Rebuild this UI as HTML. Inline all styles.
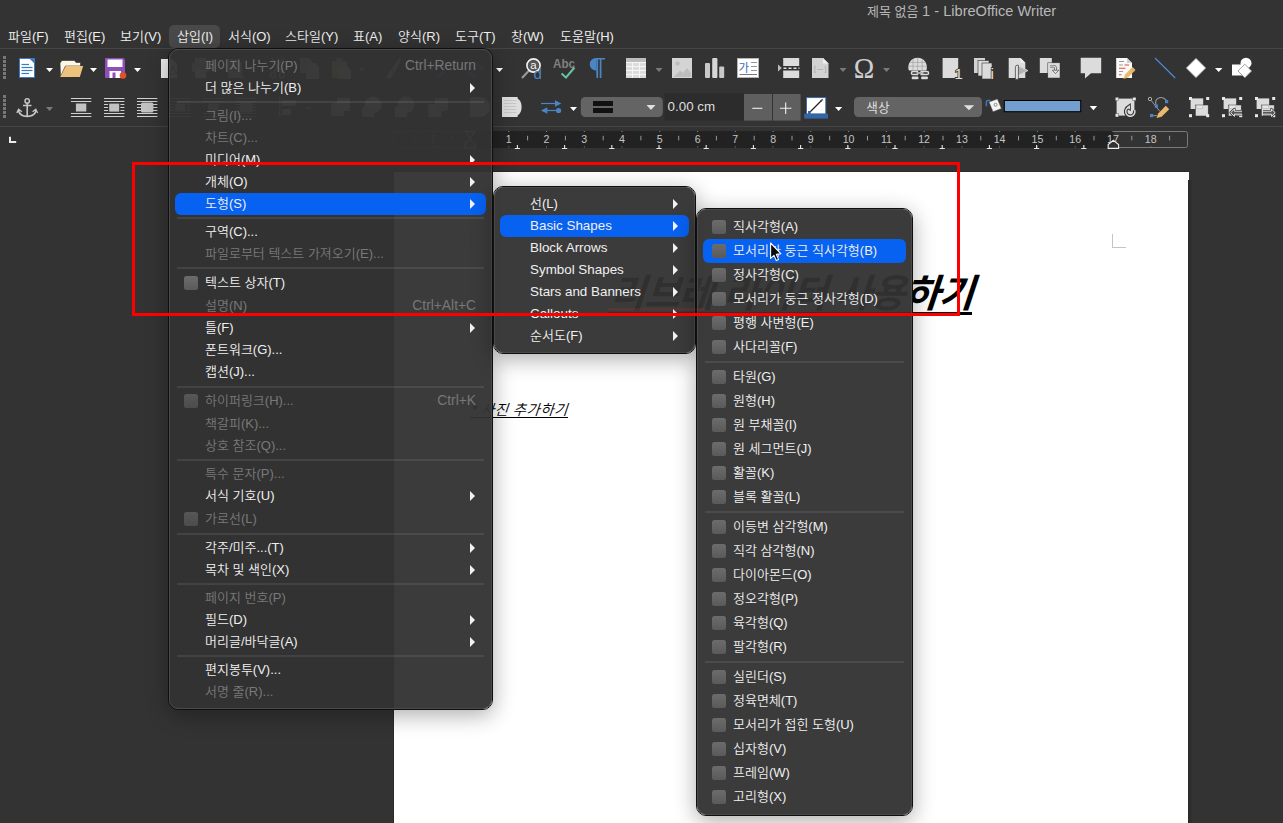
<!DOCTYPE html>
<html lang="ko">
<head>
<meta charset="utf-8">
<title>제목 없음 1 - LibreOffice Writer</title>
<style>
html,body{margin:0;padding:0;}
body{width:1283px;height:823px;overflow:hidden;background:#333333;position:relative;
 font-family:"Liberation Sans","Noto Sans CJK KR",sans-serif;font-size:13px;color:#e6e6e6;}
.abs{position:absolute;}
#title{left:0;top:0;width:1283px;height:22px;}
#title span{position:absolute;left:867px;top:0px;font-size:13px;color:#b8b8b8;white-space:nowrap;line-height:22px;}
#title b{font-weight:normal;font-size:14.6px;}
#menubar span{position:absolute;top:28px;height:18px;line-height:18px;font-size:13px;color:#f0f0f0;white-space:nowrap;font-weight:350;}
#mb-hl{left:169px;top:25px;width:51px;height:23px;background:#494949;border-radius:5px;}
.hline{position:absolute;left:0;width:1283px;height:1px;background:#454545;}
/* page */
#page{left:394px;top:172px;width:794px;height:660px;background:#ffffff;}
#pgshadow{left:393px;top:171px;width:796px;height:660px;background:#2a2a2a;}
/* menus */
.menu{position:absolute;box-sizing:border-box;border:1px solid #0f0f0f;border-radius:10px;
 box-shadow:0 5px 22px rgba(0,0,0,0.33);}
.menu .in{position:absolute;left:0;top:0;right:0;bottom:0;border:1px solid #4a4a4a;border-radius:9px;background:rgba(50,50,50,0.955);}
.mi{position:absolute;white-space:nowrap;font-size:13px;line-height:20px;height:20px;color:#f0f0f0;font-weight:350;}
.mi.d{color:#797979;}
.mi.l{font-size:13.4px;}
.sc{position:absolute;white-space:nowrap;font-size:13.8px;line-height:20px;height:20px;color:#777;text-align:right;}
.sep{position:absolute;height:2px;background:rgba(255,255,255,0.085);}
.hl{position:absolute;background:#0761f1;border-radius:6px;}
.cb{position:absolute;width:14px;height:14px;border-radius:2.5px;background:linear-gradient(#6c6c6c,#5a5a5a);}
.cb.d{background:linear-gradient(#575757,#4c4c4c);}
.ar{position:absolute;width:0;height:0;border-left:5.5px solid #f2f2f2;border-top:5px solid transparent;border-bottom:5px solid transparent;}
#doctitle{left:608px;top:267px;width:364px;height:45px;border-bottom:3px solid #000;font-family:"Liberation Sans","Noto Sans CJK KR",sans-serif;font-size:38.4px;letter-spacing:-0.95px;font-weight:bold;color:#000;white-space:nowrap;line-height:54px;}
#doctitle span{display:inline-block;transform:skewX(-18.43deg);transform-origin:0 44px;}
#docline{left:470px;top:397px;width:98px;height:20px;border-bottom:1px solid #000;font-family:"Liberation Sans","Noto Sans CJK KR",sans-serif;font-size:14.67px;letter-spacing:0.3px;color:#000;white-space:nowrap;line-height:26.4px;font-weight:350;}
#docline span{display:inline-block;transform:skewX(-18.43deg);transform-origin:0 18px;}
#redbox{left:132px;top:162px;width:822px;height:148px;border:3px solid #ff0000;}
</style>
</head>
<body>
<div id="title" class="abs"><span>제목 없음 <b>1 - LibreOffice Writer</b></span></div>
<div id="menubar">
<div id="mb-hl" class="abs"></div>
<span style="left:8px">파일(F)</span>
<span style="left:64px">편집(E)</span>
<span style="left:120px">보기(V)</span>
<span style="left:177px">삽입(I)</span>
<span style="left:228px">서식(O)</span>
<span style="left:285px">스타일(Y)</span>
<span style="left:353px">표(A)</span>
<span style="left:398px">양식(R)</span>
<span style="left:455px">도구(T)</span>
<span style="left:511px">창(W)</span>
<span style="left:560px">도움말(H)</span>
</div>
<div class="hline" style="top:48px"></div>
<div class="hline" style="top:126px"></div>
<!-- TOOLBARS -->
<div id="toolbars"><svg class="abs" style="left:0;top:0" width="1283" height="130" viewBox="0 0 1283 130"><rect x="3" y="56" width="3" height="3" fill="#777"/>
<rect x="3" y="60" width="3" height="3" fill="#777"/>
<rect x="3" y="64" width="3" height="3" fill="#777"/>
<rect x="3" y="68" width="3" height="3" fill="#777"/>
<rect x="3" y="72" width="3" height="3" fill="#777"/>
<rect x="3" y="76" width="3" height="3" fill="#777"/>
<rect x="3" y="95" width="3" height="3" fill="#777"/>
<rect x="3" y="99" width="3" height="3" fill="#777"/>
<rect x="3" y="103" width="3" height="3" fill="#777"/>
<rect x="3" y="107" width="3" height="3" fill="#777"/>
<rect x="3" y="111" width="3" height="3" fill="#777"/>
<rect x="3" y="115" width="3" height="3" fill="#777"/>
<path d="M19.5 58.5H30L34.5 63V77.5H19.5Z" fill="#fff" stroke="#3b7bc4" stroke-width="1"/>
<path d="M29.6 58H35V63.4Z" fill="#3b7bc4"/>
<path d="M21.5 64.5H29" stroke="#3b7bc4" stroke-width="1.2"/>
<path d="M21.5 67.5H32.5" stroke="#3b7bc4" stroke-width="1.2"/>
<path d="M21.5 70.5H32.5" stroke="#3b7bc4" stroke-width="1.2"/>
<path d="M21.5 73.5H29" stroke="#3b7bc4" stroke-width="1.2"/>
<path d="M46 68H53L49.5 72Z" fill="#ffffff"/>
<path d="M60 63 62 60.5H74.5L76 62.5H80.5V66H65.5L60.5 76.5Z" fill="#fff7e6" stroke="#2b2b2b" stroke-width="0.6"/>
<path d="M60.2 77 65.8 66H83.2L79.8 77Z" fill="#ecc27c"/>
<path d="M90 68H97L93.5 72Z" fill="#ffffff"/>
<path d="M105 58H123.5L125 59.5V78H105Z" fill="#8e4fb8"/>
<rect x="107.5" y="59.5" width="15" height="7.5" fill="#fff"/>
<path d="M109.5 71H121V78H109.5Z" fill="#fff"/><rect x="112.5" y="72.5" width="3" height="5.5" fill="#8e4fb8"/>
<circle cx="123" cy="75.5" r="3.3" fill="#e0502c"/>
<path d="M134 68H141L137.5 72Z" fill="#ffffff"/>
<path d="M161 59H172L177 64V78H161Z" fill="#eeeeee"/><path d="M169 76Q172 69 173 65Q174 70 177 74Q172 73 169 76Z" fill="none" stroke="#d04030" stroke-width="1.2"/>
<g><rect x="195" y="58" width="11" height="6" fill="#ddd"/><rect x="192" y="63" width="17" height="9" rx="1" fill="#ccc"/><rect x="195" y="70" width="11" height="8" fill="#eee"/><path d="M228 59H238L242 63V78H228Z" fill="#ccc"/><circle cx="236" cy="69" r="5" fill="#999" stroke="#eee" stroke-width="1.5"/><path d="M239.500 73 244 78" stroke="#bbb" stroke-width="2"/><path d="M272 58 281 72M283 58 274 72" stroke="#ccc" stroke-width="1.6"/><circle cx="273" cy="75" r="2.6" fill="none" stroke="#ccc" stroke-width="1.4"/><circle cx="282" cy="75" r="2.6" fill="none" stroke="#ccc" stroke-width="1.4"/><path d="M300 58H309L312 61V73H300Z" fill="#ccc"/><path d="M306 63H315L319 67V79H306Z" fill="#e4e4e4"/><path d="M332 61H347V78H332Z" fill="#e8c080"/><rect x="336" y="58" width="7" height="5" rx="1" fill="#bbb"/><path d="M339 66H347L351 70V79H339Z" fill="#eee"/><path d="M386 78 390 70 394 72 391 78Z" fill="#e8c080"/><path d="M391 70 399 58 401 59.500 395 72Z" fill="#ccc"/><path d="M431 70A6.500 6.500 0 1 1 437 76" fill="none" stroke="#4a86c5" stroke-width="2.2"/><path d="M427 66 431 72 435 66Z" fill="#4a86c5"/><path d="M482 70A6.500 6.500 0 1 0 476 76" fill="none" stroke="#4a86c5" stroke-width="2.2"/><path d="M486 66 482 72 478 66Z" fill="#4a86c5"/></g>
<path d="M358 68H365L361.5 72Z" fill="#999"/>
<path d="M448 68H455L451.5 72Z" fill="#999"/>
<path d="M496 68H503L499.5 72Z" fill="#ffffff"/>
<path d="M522 78 529 70.5" stroke="#9a9a9a" stroke-width="2"/>
<circle cx="533.5" cy="65.5" r="6.6" fill="#555" stroke="#f2f2f2" stroke-width="1.6"/>
<text x="533.4" y="69.3" font-size="11.5" fill="#f4f4f4" text-anchor="middle" font-family="Liberation Sans,sans-serif">a</text>
<text x="533.6" y="78.6" font-size="15" fill="#4a86c5" font-family="Liberation Sans,sans-serif">d</text>
<text x="553" y="68" font-size="12.5" font-weight="bold" fill="#808080" font-family="Liberation Sans,sans-serif" textLength="22" lengthAdjust="spacingAndGlyphs">Abc</text>
<path d="M561.5 73.5 566 77.5 574.5 67.5" fill="none" stroke="#66c2a4" stroke-width="2"/>
<path d="M596.5 78V59.5H605V58H596A5.7 5.7 0 0 0 596 70.5Z" fill="#4a86c5"/><path d="M597.3 59V78M600.6 59V78" stroke="#4a86c5" stroke-width="1.7"/>
<rect x="626" y="58" width="20" height="20" fill="#dcdcdc"/><rect x="626" y="58" width="20" height="4" fill="#bdbdbd"/>
<path d="M632.5 62V78" stroke="#f6f6f6" stroke-width="1"/>
<path d="M639.5 62V78" stroke="#f6f6f6" stroke-width="1"/>
<path d="M626 62.5H646" stroke="#f6f6f6" stroke-width="1"/>
<path d="M626 66.5H646" stroke="#f6f6f6" stroke-width="1"/>
<path d="M626 70.5H646" stroke="#f6f6f6" stroke-width="1"/>
<path d="M626 74.5H646" stroke="#f6f6f6" stroke-width="1"/>
<path d="M655.5 68H662.5L659.0 72Z" fill="#7a7a7a"/>
<rect x="672" y="58" width="20" height="20" fill="#d4d4d4"/><circle cx="677.5" cy="63.5" r="2.2" fill="#bdbdbd"/><path d="M673.5 77 680 70.5 683 73 687 68 691 73V77Z" fill="#bdbdbd"/>
<rect x="705" y="63" width="5" height="15" rx="1" fill="#c9c9c9"/><rect x="712.2" y="58" width="5.2" height="20" rx="1" fill="#d6d6d6"/><rect x="719.2" y="66.5" width="5" height="11.5" rx="1" fill="#c9c9c9"/>
<rect x="737.5" y="58.5" width="21" height="19" fill="#fff" stroke="#b5b5b5" stroke-width="1"/>
<text x="738.6" y="71.6" font-size="11.5" fill="#3b6fb5" font-family="Noto Sans CJK KR,sans-serif">가</text>
<path d="M751 62.5H757M751 66.5H757M751 70.5H757" stroke="#8a8a8a" stroke-width="0.9"/><path d="M739.5 74.5H757" stroke="#6a6a6a" stroke-width="0.9"/>
<path d="M778 64.5V71.5L781.8 68Z" fill="#bdbdbd"/><rect x="783.2" y="58" width="16" height="8" fill="#dcdcdc"/><rect x="783.2" y="70.5" width="16" height="7.5" fill="#dcdcdc"/><path d="M783.5 68.2H799.5" stroke="#dcdcdc" stroke-width="1.4" stroke-dasharray="3 2"/>
<path d="M812 58H823L828.5 63.5V78H812Z" fill="#d2d2d2"/><path d="M823 58V63.5H828.5Z" fill="#efefef"/><path d="M816 66.5H814.8V72.5H816M824.5 66.5H825.7V72.5H824.5M817.3 69.5H823.2" fill="none" stroke="#b4b4b4" stroke-width="1.1"/>
<path d="M839.5 68H846.5L843.0 72Z" fill="#7a7a7a"/>
<text x="864" y="78" font-size="29" fill="#cfcfcf" text-anchor="middle" font-family="Liberation Serif,serif" textLength="20.5" lengthAdjust="spacingAndGlyphs">Ω</text>
<path d="M883 68H890L886.5 72Z" fill="#7a7a7a"/>
<path d="M909 70.6A9.3 9.3 0 1 1 926.2 70.6Z" fill="#dcdcdc"/><path d="M917.6 58V70.6M913 59.2V70.6M922.2 59.2V70.6M909.8 62.4H925.4M908.6 66.2H926.6" stroke="#a0a0a0" stroke-width="0.7"/>
<path d="M913 71.4H918.2M913 74.6H918.2M913 71.4A1.6 1.6 0 0 0 913 74.6M920.4 71.4H927M920.4 74.6H927M927 71.4A1.6 1.6 0 0 1 927 74.6" fill="none" stroke="#dcdcdc" stroke-width="1.5"/><path d="M916.5 73H923.5" stroke="#dcdcdc" stroke-width="1.4"/>
<rect x="911.6" y="76.6" width="7" height="2.6" rx="1.3" fill="#dcdcdc"/><rect x="921" y="76.6" width="7" height="2.6" rx="1.3" fill="#dcdcdc"/>
<rect x="942.6" y="58" width="15.6" height="20" fill="#dcdcdc"/><text x="954.6" y="79" font-size="15" fill="#e4e4e4" stroke="#333" stroke-width="1.6" paint-order="stroke" style="font-family:'Liberation Sans',sans-serif">1</text>
<rect x="974" y="58" width="11" height="15" fill="#d2d2d2"/><rect x="978" y="60.5" width="11" height="15.5" fill="#dcdcdc" stroke="#333" stroke-width="0.6"/><rect x="982" y="63" width="10" height="16" fill="#dcdcdc" stroke="#333" stroke-width="0.6"/><text x="990.6" y="79" font-size="15" fill="#e4e4e4" stroke="#333" stroke-width="1.4" paint-order="stroke" style="font-family:'Liberation Sans',sans-serif">i</text>
<path d="M1008.7 58H1020.5L1025.3 62.8V78H1008.7Z" fill="#dcdcdc"/><path d="M1020.5 58V62.8H1025.3Z" fill="#f0f0f0"/>
<path d="M1017.6 65.6 1028 70.6 1017.6 75.8Z" fill="#b4b4b4" stroke="#dcdcdc" stroke-width="0.8"/><path d="M1015.4 79.4V67.2Q1015.4 65.2 1017.4 65.2H1018.4V79.4Z" fill="#e2e2e2" stroke="#333" stroke-width="0.7"/>
<rect x="1039.8" y="58" width="12" height="15" fill="#dcdcdc"/><rect x="1047.8" y="62.8" width="12.2" height="15.2" fill="#dcdcdc" stroke="#333" stroke-width="0.5"/><path d="M1050 66.2H1053.8Q1055.5 66.2 1055.5 68.5V70.3" fill="none" stroke="#555" stroke-width="2.6"/><path d="M1050 66.2H1053.8Q1055.5 66.2 1055.5 68.5V70.3" fill="none" stroke="#e0e0e0" stroke-width="1.2"/><path d="M1052.2 70.2H1058.8L1055.5 73.6Z" fill="#e0e0e0" stroke="#555" stroke-width="0.7"/>
<path d="M1080.7 57.8H1101.2V73.3H1091L1085 78.4V73.3H1080.7Z" fill="#dcdcdc"/>
<path d="M1116.2 58H1127L1132 63V78H1116.2Z" fill="#fafafa"/><path d="M1127 58V63H1132Z" fill="#d0d0d0"/>
<path d="M1119 61.5H1124M1119 71.5H1123" stroke="#9a9a9a" stroke-width="1"/><path d="M1124.5 65H1129M1119 68.2H1125.5M1119 74.7H1121.5" stroke="#e0502c" stroke-width="1.1"/><path d="M1119 65H1122.8" stroke="#9a9a9a" stroke-width="1"/>
<path d="M1123.5 79 1125 74.5 1132.5 67 1135.5 70 1128 77.5Z" fill="#e9b96e"/><path d="M1131 68.5 1134 71.5" stroke="#c89a50" stroke-width="0.8"/>
<path d="M1155 58 1175.2 78" stroke="#4a8fdb" stroke-width="1.1"/>
<path d="M1196 58.4 1205.6 68 1196 77.6 1186.4 68Z" fill="#fff" stroke="#bdbdbd" stroke-width="0.8"/>
<path d="M1215 68H1222.4L1218.7 72Z" fill="#ffffff"/>
<circle cx="1246" cy="63.2" r="5.5" fill="#fff"/><rect x="1232" y="64.5" width="11" height="11" fill="#fff"/><path d="M1244.8 64.2 1251.6 71 1244.8 77.8 1238 71Z" fill="#fff" stroke="#8a8a8a" stroke-width="0.8"/>
<circle cx="27.2" cy="101" r="2.2" fill="none" stroke="#c6c6c6" stroke-width="1.5"/><path d="M27.2 103.2V116M23 105.5H31.5" stroke="#c6c6c6" stroke-width="1.6" fill="none"/><path d="M18.3 110.5Q20 116.2 27.2 116.4Q34.4 116.2 36.2 110.5" fill="none" stroke="#c6c6c6" stroke-width="1.7"/><path d="M16.8 113 18.6 109.2 21.8 111.8M37.6 113 35.8 109.2 32.6 111.8" fill="none" stroke="#c6c6c6" stroke-width="1.3"/>
<path d="M46 107H53L49.5 111Z" fill="#7a7a7a"/>
<path d="M70.9 98.5H91.30000000000001" stroke="#d0d0d0" stroke-width="1"/><path d="M70.9 101.5H91.30000000000001" stroke="#d0d0d0" stroke-width="1"/><path d="M70.9 113.5H91.30000000000001" stroke="#d0d0d0" stroke-width="1"/><path d="M70.9 116.5H91.30000000000001" stroke="#d0d0d0" stroke-width="1"/><rect x="75.9" y="103.5" width="10.4" height="8" fill="#c2c2c2"/>
<path d="M104 98.5H124.4" stroke="#d0d0d0" stroke-width="1"/><path d="M104 101.5H124.4" stroke="#d0d0d0" stroke-width="1"/><path d="M104 104.5H124.4" stroke="#d0d0d0" stroke-width="1"/><path d="M104 107.5H124.4" stroke="#d0d0d0" stroke-width="1"/><path d="M104 110.5H124.4" stroke="#d0d0d0" stroke-width="1"/><path d="M104 113.5H124.4" stroke="#d0d0d0" stroke-width="1"/><path d="M104 116.5H124.4" stroke="#d0d0d0" stroke-width="1"/><rect x="108" y="102.8" width="12.4" height="9.6" fill="#333"/><rect x="109.2" y="103.6" width="10" height="8" fill="#c2c2c2"/>
<path d="M137 98.5H157.4" stroke="#d0d0d0" stroke-width="1"/><path d="M137 101.5H157.4" stroke="#d0d0d0" stroke-width="1"/><path d="M137 104.5H157.4" stroke="#d0d0d0" stroke-width="1"/><path d="M137 107.5H157.4" stroke="#d0d0d0" stroke-width="1"/><path d="M137 110.5H157.4" stroke="#d0d0d0" stroke-width="1"/><path d="M137 113.5H157.4" stroke="#d0d0d0" stroke-width="1"/><path d="M137 116.5H157.4" stroke="#d0d0d0" stroke-width="1"/><rect x="141" y="102.6" width="12.4" height="10" rx="1.5" fill="#c2c2c2"/>
<path d="M170 98.5H190.4" stroke="#d0d0d0" stroke-width="1"/><path d="M170 101.5H190.4" stroke="#d0d0d0" stroke-width="1"/><path d="M170 104.5H190.4" stroke="#d0d0d0" stroke-width="1"/><path d="M170 107.5H190.4" stroke="#d0d0d0" stroke-width="1"/><path d="M170 110.5H190.4" stroke="#d0d0d0" stroke-width="1"/><path d="M170 113.5H190.4" stroke="#d0d0d0" stroke-width="1"/><path d="M170 116.5H190.4" stroke="#d0d0d0" stroke-width="1"/><rect x="174" y="102.8" width="12.4" height="9.6" fill="#333"/><rect x="175.2" y="103.6" width="10" height="8" fill="#c2c2c2"/>
<path d="M203 98.5H223.4" stroke="#d0d0d0" stroke-width="1"/><path d="M203 101.5H223.4" stroke="#d0d0d0" stroke-width="1"/><path d="M203 113.5H223.4" stroke="#d0d0d0" stroke-width="1"/><path d="M203 116.5H223.4" stroke="#d0d0d0" stroke-width="1"/><rect x="208" y="103.5" width="10.4" height="8" fill="#c2c2c2"/>
<path d="M236 98.5H256.4" stroke="#d0d0d0" stroke-width="1"/><path d="M236 101.5H256.4" stroke="#d0d0d0" stroke-width="1"/><path d="M236 104.5H256.4" stroke="#d0d0d0" stroke-width="1"/><path d="M236 107.5H256.4" stroke="#d0d0d0" stroke-width="1"/><path d="M236 110.5H256.4" stroke="#d0d0d0" stroke-width="1"/><path d="M236 113.5H256.4" stroke="#d0d0d0" stroke-width="1"/><path d="M236 116.5H256.4" stroke="#d0d0d0" stroke-width="1"/><rect x="240" y="102.6" width="12.4" height="10" rx="1.5" fill="#c2c2c2"/>
<g><rect x="279" y="97" width="1.500" height="20" fill="#ccc"/><rect x="282" y="100" width="14" height="6" fill="#ccc"/><rect x="282" y="109" width="9" height="6" fill="#ddd"/><rect x="331" y="103" width="13" height="13" fill="#ccc"/><rect x="337" y="98" width="13" height="13" fill="#e4e4e4"/><circle cx="373" cy="105" r="8.500" fill="#d8d8d8"/><rect x="362" y="107" width="12" height="10" fill="#c4c4c4"/><circle cx="406" cy="105" r="8.500" fill="#c4c4c4"/><rect x="395" y="107" width="12" height="10" fill="#dcdcdc"/><rect x="428.500" y="104" width="13" height="13" fill="#e4e4e4"/><rect x="435" y="98" width="13" height="13" fill="#ccc"/><path d="M470 97H480A9.800 9.800 0 0 1 480 117H470Z" fill="#dedede"/></g>
<path d="M305 107H312L308.5 111Z" fill="#999"/>
<path d="M502 97H517.6V98.6Q521.6 101 521.6 107Q521.6 113 517.6 115.4V117H502Z" fill="#dedede"/>
<path d="M504 100.5H516.5" stroke="#c4c4c4" stroke-width="0.9"/>
<path d="M504 103.5H516.5" stroke="#c4c4c4" stroke-width="0.9"/>
<path d="M504 106.5H516.5" stroke="#c4c4c4" stroke-width="0.9"/>
<path d="M504 109.5H516.5" stroke="#c4c4c4" stroke-width="0.9"/>
<path d="M504 112.5H516.5" stroke="#c4c4c4" stroke-width="0.9"/>
<path d="M541 103.5H556" stroke="#4a86c5" stroke-width="1.2"/><path d="M555 100.3 561.3 103.5 555 106.7Z" fill="#4a86c5"/><path d="M546 110.5H557" stroke="#4a86c5" stroke-width="1.2"/><path d="M547.4 107.3 541 110.5 547.4 113.7Z" fill="#4a86c5"/><circle cx="558.6" cy="110.5" r="2.6" fill="#4a86c5"/>
<path d="M570 107H577L573.5 111Z" fill="#ffffff"/>
<rect x="580.8" y="97" width="82" height="20" rx="4.5" fill="#646464"/><rect x="593" y="101" width="20" height="5" fill="#111"/><rect x="593" y="108" width="20" height="5" fill="#111"/>
<path d="M646.5 105H655.5L651.0 110Z" fill="#e0e0e0"/>
<rect x="664.5" y="93.5" width="79.5" height="27" fill="#2c2c2c"/>
<text x="667.6" y="110.6" font-size="13.3" fill="#dedede" font-family="Liberation Sans,sans-serif" textLength="47.5" lengthAdjust="spacingAndGlyphs">0.00 cm</text>
<rect x="744" y="94" width="28" height="26.6" fill="#5f5f5f"/><rect x="773" y="94" width="27.6" height="26.6" fill="#5f5f5f"/><path d="M752.3 108.3H762.3" stroke="#f0f0f0" stroke-width="1.1"/><path d="M780 108.3H791.4M785.7 102.6V114" stroke="#f0f0f0" stroke-width="1.1"/>
<rect x="806.5" y="97.6" width="19.3" height="16.4" fill="#fff" stroke="#3a66a8" stroke-width="0.9"/><path d="M809 113 822.5 99.5" stroke="#222" stroke-width="1.3"/><path d="M822.8 99 820 100.4 821.6 102Z" fill="#555"/><rect x="808" y="111" width="2.5" height="3" fill="#3465a4"/><rect x="804.2" y="113.7" width="23.8" height="4.9" fill="#3465a4"/>
<path d="M835 107H842.2L838.6 111Z" fill="#ffffff"/>
<rect x="854" y="97" width="128" height="20" rx="4.5" fill="#646464"/>
<text x="866.3" y="111.6" font-size="12.6" fill="#dedede" font-family="Noto Sans CJK KR,sans-serif">색상</text>
<path d="M963.8 105.2H974.2L969.0 110.2Z" fill="#e0e0e0"/>
<path d="M990.5 100.5H987.8Q986.4 100.5 986.4 102V106.2" fill="none" stroke="#3c74bd" stroke-width="1.6"/><path d="M989 102 997.4 99 1001.4 108.6 993 111.7Z" fill="#f4f4f4" stroke="#555" stroke-width="0.5"/><circle cx="995.6" cy="104.8" r="1.5" fill="none" stroke="#666" stroke-width="0.7"/>
<rect x="1004.3" y="100.5" width="76.4" height="11.2" fill="#729fcf" stroke="#000" stroke-width="1"/>
<path d="M1089.7 106H1097.1L1093.4 110.2Z" fill="#ffffff"/>
<rect x="1116.6" y="98.6" width="17.8" height="17" fill="#dcdcdc"/>
<rect x="1115.2" y="97.2" width="3.4" height="3.4" fill="#e8e8e8" stroke="#333" stroke-width="0.4"/>
<rect x="1132.6" y="97.2" width="3.4" height="3.4" fill="#e8e8e8" stroke="#333" stroke-width="0.4"/>
<rect x="1115.2" y="113.6" width="3.4" height="3.4" fill="#e8e8e8" stroke="#333" stroke-width="0.4"/>
<path d="M1129 107.2A4.6 4.6 0 1 0 1134.6 110" fill="none" stroke="#333" stroke-width="3.6"/><path d="M1126 107.2 1130.2 104.2V110.2Z" fill="#333" stroke="#333" stroke-width="1.2"/><path d="M1129 107.2A4.6 4.6 0 1 0 1134.6 110" fill="none" stroke="#d8d8d8" stroke-width="1.5"/><path d="M1126.6 107.2 1130 104.900V109.500Z" fill="#d8d8d8"/>
<circle cx="1150" cy="99" r="1.7" fill="none" stroke="#bdbdbd" stroke-width="0.9"/><path d="M1151 100.3 1160 111.5" stroke="#9a9a9a" stroke-width="1"/><path d="M1156 105.5C1153 96 1165 95.5 1166.5 101.5" fill="none" stroke="#9a9a9a" stroke-width="1.1"/>
<rect x="1165" y="100" width="3.2" height="3.2" fill="#4a86c5"/><rect x="1154.8" y="104.6" width="3.2" height="3.2" fill="#4a86c5"/><rect x="1150" y="114" width="3.2" height="3.2" fill="#4a86c5"/><path d="M1153.3 115.6H1157" stroke="#9a9a9a" stroke-width="0.9"/>
<path d="M1156.5 118 1158.2 113.4 1165.8 105.8 1169.2 109.2 1161.6 116.8Z" fill="#e9b96e"/>
<rect x="1190.6" y="98.4" width="12.6" height="10.6" fill="#dcdcdc"/><rect x="1195.4" y="105" width="12.8" height="11" fill="#dcdcdc" stroke="#333" stroke-width="0.5"/><rect x="1196.4" y="105.6" width="6.4" height="2.8" fill="#e6e6e6" stroke="#b0b0b0" stroke-width="0.5"/><rect x="1189" y="97" width="3" height="3" fill="#e8e8e8"/><rect x="1206.2" y="97" width="3" height="3" fill="#e8e8e8"/><rect x="1189" y="114.2" width="3" height="3" fill="#e8e8e8"/><rect x="1206.2" y="114.2" width="3" height="3" fill="#e8e8e8"/>
<rect x="1223.6" y="98.4" width="12.6" height="10.6" fill="#dcdcdc"/><rect x="1228.4" y="105" width="12.8" height="11" fill="#dcdcdc" stroke="#333" stroke-width="0.5"/><rect x="1229.4" y="105.6" width="6.4" height="2.8" fill="#e6e6e6" stroke="#b0b0b0" stroke-width="0.5"/><rect x="1222" y="97" width="3" height="3" fill="#e8e8e8"/><rect x="1239.2" y="97" width="3" height="3" fill="#e8e8e8"/><rect x="1222" y="114.2" width="3" height="3" fill="#e8e8e8"/><rect x="1239.2" y="114.2" width="3" height="3" fill="#e8e8e8"/><path d="M1242 111.2H1234.4V109L1230.6 112.7 1234.4 116.4V114.2H1242" fill="#dcdcdc" stroke="#333" stroke-width="2.4" stroke-linejoin="round"/><path d="M1242 111.2H1234.4V109L1230.6 112.7 1234.4 116.4V114.2H1242" fill="#555" stroke="#ececec" stroke-width="1"/>
<rect x="1256.6" y="98.4" width="12.6" height="10.6" fill="#dcdcdc"/><rect x="1261.4" y="105" width="12.8" height="11" fill="#dcdcdc" stroke="#333" stroke-width="0.5"/><rect x="1262.4" y="105.6" width="6.4" height="2.8" fill="#e6e6e6" stroke="#b0b0b0" stroke-width="0.5"/><rect x="1255" y="97" width="3" height="3" fill="#e8e8e8"/><rect x="1272.2" y="97" width="3" height="3" fill="#e8e8e8"/><rect x="1255" y="114.2" width="3" height="3" fill="#e8e8e8"/><rect x="1272.2" y="114.2" width="3" height="3" fill="#e8e8e8"/><path d="M1263 111.2H1271.4V109L1275.2 112.7 1271.4 116.4V114.2H1263" fill="#dcdcdc" stroke="#333" stroke-width="2.4" stroke-linejoin="round"/><path d="M1263 111.2H1271.4V109L1275.2 112.7 1271.4 116.4V114.2H1263" fill="#555" stroke="#ececec" stroke-width="1"/></svg></div>
<!-- RULER -->
<div id="ruler"><svg class="abs" style="left:0;top:0" width="1283" height="160" viewBox="0 0 1283 160"><rect x="470" y="131" width="643.5" height="17" fill="#222222"/>
<path d="M470 131.5H395.5Q393.5 131.5 393.5 133.5V145.5Q393.5 147.5 395.5 147.5H470" fill="none" stroke="#7a7a7a" stroke-width="1"/>
<path d="M1113.5 131.5H1185.5Q1187.5 131.5 1187.5 133.5V145.5Q1187.5 147.5 1185.5 147.5H1113.5" fill="none" stroke="#7a7a7a" stroke-width="1"/>
<text x="433.2" y="142.6" font-size="10.6" fill="#c4c4c4" text-anchor="middle" font-family="Liberation Sans,sans-serif">1</text>
<rect x="432.7" y="131" width="1" height="1" fill="#8a8a8a"/><rect x="432.7" y="146.4" width="1" height="1" fill="#8a8a8a"/>
<text x="508.8" y="142.6" font-size="10.6" fill="#c4c4c4" text-anchor="middle" font-family="Liberation Sans,sans-serif">1</text>
<rect x="508.3" y="131" width="1" height="1" fill="#8a8a8a"/><rect x="508.3" y="146.4" width="1" height="1" fill="#8a8a8a"/>
<text x="546.5" y="142.6" font-size="10.6" fill="#c4c4c4" text-anchor="middle" font-family="Liberation Sans,sans-serif">2</text>
<rect x="546.0" y="131" width="1" height="1" fill="#8a8a8a"/><rect x="546.0" y="146.4" width="1" height="1" fill="#8a8a8a"/>
<text x="584.3" y="142.6" font-size="10.6" fill="#c4c4c4" text-anchor="middle" font-family="Liberation Sans,sans-serif">3</text>
<rect x="583.8" y="131" width="1" height="1" fill="#8a8a8a"/><rect x="583.8" y="146.4" width="1" height="1" fill="#8a8a8a"/>
<text x="622.0" y="142.6" font-size="10.6" fill="#c4c4c4" text-anchor="middle" font-family="Liberation Sans,sans-serif">4</text>
<rect x="621.5" y="131" width="1" height="1" fill="#8a8a8a"/><rect x="621.5" y="146.4" width="1" height="1" fill="#8a8a8a"/>
<text x="659.8" y="142.6" font-size="10.6" fill="#c4c4c4" text-anchor="middle" font-family="Liberation Sans,sans-serif">5</text>
<rect x="659.3" y="131" width="1" height="1" fill="#8a8a8a"/><rect x="659.3" y="146.4" width="1" height="1" fill="#8a8a8a"/>
<text x="697.6" y="142.6" font-size="10.6" fill="#c4c4c4" text-anchor="middle" font-family="Liberation Sans,sans-serif">6</text>
<rect x="697.1" y="131" width="1" height="1" fill="#8a8a8a"/><rect x="697.1" y="146.4" width="1" height="1" fill="#8a8a8a"/>
<text x="735.3" y="142.6" font-size="10.6" fill="#c4c4c4" text-anchor="middle" font-family="Liberation Sans,sans-serif">7</text>
<rect x="734.8" y="131" width="1" height="1" fill="#8a8a8a"/><rect x="734.8" y="146.4" width="1" height="1" fill="#8a8a8a"/>
<text x="773.1" y="142.6" font-size="10.6" fill="#c4c4c4" text-anchor="middle" font-family="Liberation Sans,sans-serif">8</text>
<rect x="772.6" y="131" width="1" height="1" fill="#8a8a8a"/><rect x="772.6" y="146.4" width="1" height="1" fill="#8a8a8a"/>
<text x="810.8" y="142.6" font-size="10.6" fill="#c4c4c4" text-anchor="middle" font-family="Liberation Sans,sans-serif">9</text>
<rect x="810.3" y="131" width="1" height="1" fill="#8a8a8a"/><rect x="810.3" y="146.4" width="1" height="1" fill="#8a8a8a"/>
<text x="848.6" y="142.6" font-size="10.6" fill="#c4c4c4" text-anchor="middle" font-family="Liberation Sans,sans-serif">10</text>
<rect x="848.1" y="131" width="1" height="1" fill="#8a8a8a"/><rect x="848.1" y="146.4" width="1" height="1" fill="#8a8a8a"/>
<text x="886.4" y="142.6" font-size="10.6" fill="#c4c4c4" text-anchor="middle" font-family="Liberation Sans,sans-serif">11</text>
<rect x="885.9" y="131" width="1" height="1" fill="#8a8a8a"/><rect x="885.9" y="146.4" width="1" height="1" fill="#8a8a8a"/>
<text x="924.1" y="142.6" font-size="10.6" fill="#c4c4c4" text-anchor="middle" font-family="Liberation Sans,sans-serif">12</text>
<rect x="923.6" y="131" width="1" height="1" fill="#8a8a8a"/><rect x="923.6" y="146.4" width="1" height="1" fill="#8a8a8a"/>
<text x="961.9" y="142.6" font-size="10.6" fill="#c4c4c4" text-anchor="middle" font-family="Liberation Sans,sans-serif">13</text>
<rect x="961.4" y="131" width="1" height="1" fill="#8a8a8a"/><rect x="961.4" y="146.4" width="1" height="1" fill="#8a8a8a"/>
<text x="999.6" y="142.6" font-size="10.6" fill="#c4c4c4" text-anchor="middle" font-family="Liberation Sans,sans-serif">14</text>
<rect x="999.1" y="131" width="1" height="1" fill="#8a8a8a"/><rect x="999.1" y="146.4" width="1" height="1" fill="#8a8a8a"/>
<text x="1037.4" y="142.6" font-size="10.6" fill="#c4c4c4" text-anchor="middle" font-family="Liberation Sans,sans-serif">15</text>
<rect x="1036.9" y="131" width="1" height="1" fill="#8a8a8a"/><rect x="1036.9" y="146.4" width="1" height="1" fill="#8a8a8a"/>
<text x="1075.2" y="142.6" font-size="10.6" fill="#c4c4c4" text-anchor="middle" font-family="Liberation Sans,sans-serif">16</text>
<rect x="1074.7" y="131" width="1" height="1" fill="#8a8a8a"/><rect x="1074.7" y="146.4" width="1" height="1" fill="#8a8a8a"/>
<text x="1112.9" y="142.6" font-size="10.6" fill="#c4c4c4" text-anchor="middle" font-family="Liberation Sans,sans-serif">17</text>
<rect x="1112.4" y="131" width="1" height="1" fill="#8a8a8a"/><rect x="1112.4" y="146.4" width="1" height="1" fill="#8a8a8a"/>
<text x="1150.7" y="142.6" font-size="10.6" fill="#c4c4c4" text-anchor="middle" font-family="Liberation Sans,sans-serif">18</text>
<rect x="1150.2" y="131" width="1" height="1" fill="#8a8a8a"/><rect x="1150.2" y="146.4" width="1" height="1" fill="#8a8a8a"/>
<path d="M414.4 135.8V140.4" stroke="#9a9a9a" stroke-width="1"/>
<path d="M452.1 135.8V140.4" stroke="#9a9a9a" stroke-width="1"/>
<path d="M489.9 135.8V140.4" stroke="#9a9a9a" stroke-width="1"/>
<path d="M527.6 135.8V140.4" stroke="#9a9a9a" stroke-width="1"/>
<path d="M565.4 135.8V140.4" stroke="#9a9a9a" stroke-width="1"/>
<path d="M603.2 135.8V140.4" stroke="#9a9a9a" stroke-width="1"/>
<path d="M640.9 135.8V140.4" stroke="#9a9a9a" stroke-width="1"/>
<path d="M678.7 135.8V140.4" stroke="#9a9a9a" stroke-width="1"/>
<path d="M716.4 135.8V140.4" stroke="#9a9a9a" stroke-width="1"/>
<path d="M754.2 135.8V140.4" stroke="#9a9a9a" stroke-width="1"/>
<path d="M792.0 135.8V140.4" stroke="#9a9a9a" stroke-width="1"/>
<path d="M829.7 135.8V140.4" stroke="#9a9a9a" stroke-width="1"/>
<path d="M867.5 135.8V140.4" stroke="#9a9a9a" stroke-width="1"/>
<path d="M905.2 135.8V140.4" stroke="#9a9a9a" stroke-width="1"/>
<path d="M943.0 135.8V140.4" stroke="#9a9a9a" stroke-width="1"/>
<path d="M980.8 135.8V140.4" stroke="#9a9a9a" stroke-width="1"/>
<path d="M1018.5 135.8V140.4" stroke="#9a9a9a" stroke-width="1"/>
<path d="M1056.3 135.8V140.4" stroke="#9a9a9a" stroke-width="1"/>
<path d="M1094.0 135.8V140.4" stroke="#9a9a9a" stroke-width="1"/>
<path d="M1131.8 135.8V140.4" stroke="#9a9a9a" stroke-width="1"/>
<path d="M1169.6 135.8V140.4" stroke="#9a9a9a" stroke-width="1"/>
<path d="M517.4 145V148.4M514.8 148.5H520.0" stroke="#e8e8e8" stroke-width="1.1" fill="none"/>
<path d="M564.6 145V148.4M562.0 148.5H567.2" stroke="#e8e8e8" stroke-width="1.1" fill="none"/>
<path d="M611.8 145V148.4M609.2 148.5H614.4" stroke="#e8e8e8" stroke-width="1.1" fill="none"/>
<path d="M659.0 145V148.4M656.4 148.5H661.6" stroke="#e8e8e8" stroke-width="1.1" fill="none"/>
<path d="M706.2 145V148.4M703.6 148.5H708.8" stroke="#e8e8e8" stroke-width="1.1" fill="none"/>
<path d="M753.4 145V148.4M750.8 148.5H756.0" stroke="#e8e8e8" stroke-width="1.1" fill="none"/>
<path d="M800.6 145V148.4M798.0 148.5H803.2" stroke="#e8e8e8" stroke-width="1.1" fill="none"/>
<path d="M847.8 145V148.4M845.2 148.5H850.4" stroke="#e8e8e8" stroke-width="1.1" fill="none"/>
<path d="M895.0 145V148.4M892.4 148.5H897.6" stroke="#e8e8e8" stroke-width="1.1" fill="none"/>
<path d="M942.2 145V148.4M939.6 148.5H944.8" stroke="#e8e8e8" stroke-width="1.1" fill="none"/>
<path d="M989.4 145V148.4M986.8 148.5H992.0" stroke="#e8e8e8" stroke-width="1.1" fill="none"/>
<path d="M1036.6 145V148.4M1034.0 148.5H1039.2" stroke="#e8e8e8" stroke-width="1.1" fill="none"/>
<path d="M1083.8 145V148.4M1081.2 148.5H1086.4" stroke="#e8e8e8" stroke-width="1.1" fill="none"/>
<path d="M465 131.5H475.5L470.2 138.5ZM470.2 139.5 475.5 144V148H465V144Z" fill="#333" stroke="#e8e8e8" stroke-width="1"/>
<path d="M1113.4 140.3 1118.6 144.6V148.4H1108.2V144.6Z" fill="#333" stroke="#f0f0f0" stroke-width="1.1"/>
<path d="M10 136.800V142H16.200" fill="none" stroke="#ececec" stroke-width="2"/></svg></div>
<!-- DOCUMENT -->
<div id="pgshadow" class="abs"></div>
<div id="page" class="abs"></div>
<div id="doc">
<div class="abs" style="left:1188px;top:172px;width:1px;height:8px;background:#fff"></div>
<div class="abs" style="left:1189px;top:180px;width:4px;height:650px;background:linear-gradient(to right,rgba(0,0,0,0.16),rgba(0,0,0,0))"></div>
<div class="abs" style="left:1112px;top:234px;width:14px;height:14px;border-left:1px solid #c4c4c4;border-bottom:1px solid #c4c4c4;box-sizing:border-box"></div>
<div class="abs" style="left:457px;top:234px;width:14px;height:14px;border-right:1px solid #c4c4c4;border-bottom:1px solid #c4c4c4;box-sizing:border-box"></div>
<div id="doctitle" class="abs"><span>리브레 라이터 사용하기</span></div>
<div id="docline" class="abs"><span>* 사진 추가하기</span></div>
</div>
<!-- MENUS -->
<div id="m1" class="menu" style="left:168px;top:48px;width:325px;height:662px;"><div class="in"></div>
<div class="mi d" style="left:36px;top:7px">페이지 나누기(P)</div>
<div class="sc" style="right:16px;top:7px">Ctrl+Return</div>
<div class="mi" style="left:36px;top:29px">더 많은 나누기(B)</div>
<div class="ar" style="left:301px;top:34px"></div>
<div class="sep" style="left:8px;top:52px;width:307px"></div>
<div class="mi d" style="left:36px;top:57px">그림(I)...</div>
<div class="mi d" style="left:36px;top:79px">차트(C)...</div>
<div class="mi" style="left:36px;top:101px">미디어(M)</div>
<div class="ar" style="left:301px;top:106px"></div>
<div class="mi" style="left:36px;top:123px">개체(O)</div>
<div class="ar" style="left:301px;top:128px"></div>
<div class="hl" style="left:6px;top:144px;width:311px;height:22px"></div>
<div class="mi" style="left:36px;top:145px">도형(S)</div>
<div class="ar" style="left:301px;top:150px"></div>
<div class="sep" style="left:8px;top:168px;width:307px"></div>
<div class="mi" style="left:36px;top:173px">구역(C)...</div>
<div class="mi d" style="left:36px;top:195px">파일로부터 텍스트 가져오기(E)...</div>
<div class="sep" style="left:8px;top:218px;width:307px"></div>
<div class="cb" style="left:15px;top:227px"></div>
<div class="mi" style="left:36px;top:224px">텍스트 상자(T)</div>
<div class="mi d" style="left:36px;top:247px">설명(N)</div>
<div class="sc" style="right:16px;top:247px">Ctrl+Alt+C</div>
<div class="mi" style="left:36px;top:269px">틀(F)</div>
<div class="ar" style="left:301px;top:274px"></div>
<div class="mi" style="left:36px;top:291px">폰트워크(G)...</div>
<div class="mi" style="left:36px;top:313px">캡션(J)...</div>
<div class="sep" style="left:8px;top:337px;width:307px"></div>
<div class="cb d" style="left:15px;top:345px"></div>
<div class="mi d" style="left:36px;top:342px">하이퍼링크(H)...</div>
<div class="sc" style="right:16px;top:342px">Ctrl+K</div>
<div class="mi d" style="left:36px;top:365px">책갈피(K)...</div>
<div class="mi d" style="left:36px;top:387px">상호 참조(Q)...</div>
<div class="sep" style="left:8px;top:410px;width:307px"></div>
<div class="mi d" style="left:36px;top:415px">특수 문자(P)...</div>
<div class="mi" style="left:36px;top:437px">서식 기호(U)</div>
<div class="ar" style="left:301px;top:442px"></div>
<div class="cb d" style="left:15px;top:463px"></div>
<div class="mi d" style="left:36px;top:460px">가로선(L)</div>
<div class="sep" style="left:8px;top:484px;width:307px"></div>
<div class="mi" style="left:36px;top:489px">각주/미주...(T)</div>
<div class="ar" style="left:301px;top:494px"></div>
<div class="mi" style="left:36px;top:511px">목차 및 색인(X)</div>
<div class="ar" style="left:301px;top:516px"></div>
<div class="sep" style="left:8px;top:534px;width:307px"></div>
<div class="mi d" style="left:36px;top:539px">페이지 번호(P)</div>
<div class="mi" style="left:36px;top:561px">필드(D)</div>
<div class="ar" style="left:301px;top:566px"></div>
<div class="mi" style="left:36px;top:583px">머리글/바닥글(A)</div>
<div class="ar" style="left:301px;top:588px"></div>
<div class="sep" style="left:8px;top:606px;width:307px"></div>
<div class="mi" style="left:36px;top:611px">편지봉투(V)...</div>
<div class="mi d" style="left:36px;top:633px">서명 줄(R)...</div>
</div>
<div id="m2" class="menu" style="left:493px;top:186px;width:203px;height:168px;"><div class="in"></div>
<div class="mi" style="left:36px;top:7px">선(L)</div>
<div class="ar" style="left:179px;top:12px"></div>
<div class="hl" style="left:6px;top:28px;width:189px;height:22px"></div>
<div class="mi l" style="left:36px;top:29px">Basic Shapes</div>
<div class="ar" style="left:179px;top:34px"></div>
<div class="mi l" style="left:36px;top:51px">Block Arrows</div>
<div class="ar" style="left:179px;top:56px"></div>
<div class="mi l" style="left:36px;top:73px">Symbol Shapes</div>
<div class="ar" style="left:179px;top:78px"></div>
<div class="mi l" style="left:36px;top:95px">Stars and Banners</div>
<div class="ar" style="left:179px;top:100px"></div>
<div class="mi l" style="left:36px;top:117px">Callouts</div>
<div class="ar" style="left:179px;top:122px"></div>
<div class="mi" style="left:36px;top:139px">순서도(F)</div>
<div class="ar" style="left:179px;top:144px"></div>
</div>
<div id="m3" class="menu" style="left:696px;top:208px;width:217px;height:608px;"><div class="in"></div>
<div class="cb" style="left:15px;top:11px"></div>
<div class="mi" style="left:36px;top:8px">직사각형(A)</div>
<div class="hl" style="left:6px;top:30px;width:203px;height:24px"></div>
<div class="cb" style="left:15px;top:35px"></div>
<div class="mi" style="left:36px;top:32px">모서리가 둥근 직사각형(B)</div>
<div class="cb" style="left:15px;top:59px"></div>
<div class="mi" style="left:36px;top:56px">정사각형(C)</div>
<div class="cb" style="left:15px;top:83px"></div>
<div class="mi" style="left:36px;top:80px">모서리가 둥근 정사각형(D)</div>
<div class="cb" style="left:15px;top:107px"></div>
<div class="mi" style="left:36px;top:104px">평행 사변형(E)</div>
<div class="cb" style="left:15px;top:131px"></div>
<div class="mi" style="left:36px;top:128px">사다리꼴(F)</div>
<div class="sep" style="left:8px;top:152px;width:199px"></div>
<div class="cb" style="left:15px;top:161px"></div>
<div class="mi" style="left:36px;top:158px">타원(G)</div>
<div class="cb" style="left:15px;top:185px"></div>
<div class="mi" style="left:36px;top:182px">원형(H)</div>
<div class="cb" style="left:15px;top:209px"></div>
<div class="mi" style="left:36px;top:206px">원 부채꼴(I)</div>
<div class="cb" style="left:15px;top:233px"></div>
<div class="mi" style="left:36px;top:230px">원 세그먼트(J)</div>
<div class="cb" style="left:15px;top:257px"></div>
<div class="mi" style="left:36px;top:254px">활꼴(K)</div>
<div class="cb" style="left:15px;top:281px"></div>
<div class="mi" style="left:36px;top:278px">블록 활꼴(L)</div>
<div class="sep" style="left:8px;top:302px;width:199px"></div>
<div class="cb" style="left:15px;top:311px"></div>
<div class="mi" style="left:36px;top:308px">이등변 삼각형(M)</div>
<div class="cb" style="left:15px;top:335px"></div>
<div class="mi" style="left:36px;top:332px">직각 삼각형(N)</div>
<div class="cb" style="left:15px;top:359px"></div>
<div class="mi" style="left:36px;top:356px">다이아몬드(O)</div>
<div class="cb" style="left:15px;top:383px"></div>
<div class="mi" style="left:36px;top:380px">정오각형(P)</div>
<div class="cb" style="left:15px;top:407px"></div>
<div class="mi" style="left:36px;top:404px">육각형(Q)</div>
<div class="cb" style="left:15px;top:431px"></div>
<div class="mi" style="left:36px;top:428px">팔각형(R)</div>
<div class="sep" style="left:8px;top:452px;width:199px"></div>
<div class="cb" style="left:15px;top:461px"></div>
<div class="mi" style="left:36px;top:458px">실린더(S)</div>
<div class="cb" style="left:15px;top:485px"></div>
<div class="mi" style="left:36px;top:482px">정육면체(T)</div>
<div class="cb" style="left:15px;top:509px"></div>
<div class="mi" style="left:36px;top:506px">모서리가 접힌 도형(U)</div>
<div class="cb" style="left:15px;top:533px"></div>
<div class="mi" style="left:36px;top:530px">십자형(V)</div>
<div class="cb" style="left:15px;top:557px"></div>
<div class="mi" style="left:36px;top:554px">프레임(W)</div>
<div class="cb" style="left:15px;top:581px"></div>
<div class="mi" style="left:36px;top:578px">고리형(X)</div>
</div>
<div id="redbox" class="abs"></div>
<svg class="abs" style="left:608px;top:306.5px;opacity:0.3" width="100" height="6" viewBox="0 0 100 6"><path d="M0 3.4 2 1.2 4 3.4 6 1.2 8 3.4 10 1.2 12 3.4 14 1.2 16 3.4 18 1.2 20 3.4 22 1.2 24 3.4 26 1.2 28 3.4 30 1.2 32 3.4 34 1.2 36 3.4 38 1.2 40 3.4 42 1.2 44 3.4 46 1.2 48 3.4 50 1.2 52 3.4 54 1.2 56 3.4 58 1.2 60 3.4 62 1.2 64 3.4 66 1.2 68 3.4 70 1.2 72 3.4 74 1.2 76 3.4 78 1.2 80 3.4 82 1.2 84 3.4 86 1.2 88 3.4 90 1.2 92 3.4 94 1.2 96 3.4 98 1.2" fill="none" stroke="#ff2a2a" stroke-width="1"/></svg><svg class="abs" style="left:769px;top:241px" width="16" height="24" viewBox="0 0 16 24"><path d="M1.6 2V17.4L5 14.4 7.3 19.6 9.6 18.6 7.3 13.4 12 12.8Z" fill="#0a0a0a" stroke="#fff" stroke-width="1.1" stroke-linejoin="round"/></svg>
</body>
</html>
